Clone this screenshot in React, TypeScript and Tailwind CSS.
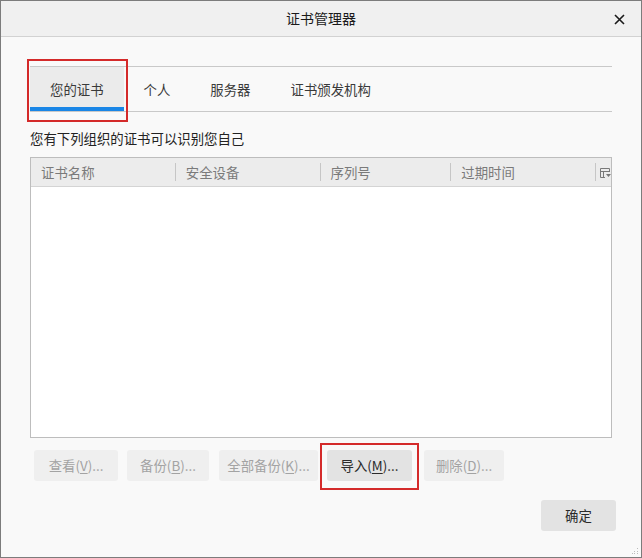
import React from "react";

const font = { fontFamily: '"Noto Sans CJK SC", "Noto Sans", sans-serif' };

function Tab({ label, active }: { label: string; active?: boolean }) {
  return (
    <div
      className={
        "relative flex h-full items-center px-5 text-[13.4px] text-[#3a3a3a] " +
        (active ? "bg-[#ebebeb]" : "")
      }
    >
      {label}
      {active && <div className="absolute bottom-0 left-0 right-0 h-[4px] bg-[#1a86e6]" />}
    </div>
  );
}

function Btn({
  label,
  k,
  rest,
  w,
  disabled,
}: {
  label: string;
  k: string;
  rest: string;
  w: string;
  disabled?: boolean;
}) {
  return (
    <div
      className={
        "flex h-[31px] items-center justify-center rounded-[3px] text-[13.4px] " +
        w +
        (disabled ? " bg-[#efefef] text-[#a3a3a3]" : " bg-[#e3e3e3] text-[#2a2a2a]")
      }
    >
      {label}(<span className="underline underline-offset-2">{k}</span>){rest}
    </div>
  );
}

const cols = [
  { name: "证书名称", w: "w-[145px]" },
  { name: "安全设备", w: "w-[145px]" },
  { name: "序列号", w: "w-[131px]" },
  { name: "过期时间", w: "w-[145px]" },
];

export default function App() {
  return (
    <div
      className="flex h-[558px] w-[642px] flex-col border border-[#7c7c7c] bg-[#f9f9f9]"
      style={font}
    >
      <div className="relative flex h-[36px] shrink-0 items-center justify-center border-b border-[#d2d2d2] bg-[#f0f0f0] text-[14px] text-[#1a1a1a]">
        证书管理器
        <svg className="absolute right-[16px] top-[13px]" width="11" height="11" viewBox="0 0 11 11">
          <path d="M1 1L10 10M10 1L1 10" stroke="#1a1a1a" strokeWidth="1.6" />
        </svg>
      </div>

      <div className="flex flex-1 flex-col px-[29px]">
        <div className="relative mt-[29px] flex h-[46px] border-y border-[#c9c9c9]">
          <Tab label="您的证书" active />
          <Tab label="个人" />
          <Tab label="服务器" />
          <Tab label="证书颁发机构" />
          <div className="pointer-events-none absolute left-[-3px] top-[-8px] h-[63px] w-[101px] border-2 border-[#d42a2a]" />
        </div>

        <div className="mt-[17px] text-[13.4px] leading-[18px] text-[#222]">您有下列组织的证书可以识别您自己</div>

        <div className="mt-[10px] flex h-[281px] w-[582px] flex-col border border-[#bdbdbd] bg-white">
          <div className="flex h-[29px] shrink-0 items-center border-b border-[#d4d4d4] bg-[#ececec] text-[13.4px] text-[#7a7a7a]">
            {cols.map((c) => (
              <div key={c.name} className={"flex h-full items-center " + c.w}>
                <span className="pl-[10px]">{c.name}</span>
                <div className="ml-auto h-[18px] w-px bg-[#c6c6c6]" />
              </div>
            ))}
            <svg className="ml-[4px]" width="11" height="11" viewBox="0 0 11 11">
              <path d="M0.5 1.5H9.5V5M0.5 1.5V10.5H5M0.5 4.5H9.5M3.5 4.5V10.5" stroke="#777" fill="none" />
              <path d="M6 7H11L8.5 10Z" fill="#777" />
            </svg>
          </div>
          <div className="flex-1" />
        </div>

        <div className="mt-[12px] flex pl-[4px]">
          <Btn label="查看" k="V" rest="..." w="w-[84px]" disabled />
          <div className="ml-[9px]">
            <Btn label="备份" k="B" rest="..." w="w-[82px]" disabled />
          </div>
          <div className="ml-[10px]">
            <Btn label="全部备份" k="K" rest="..." w="w-[99px]" disabled />
          </div>
          <div className="relative ml-[9px]">
            <Btn label="导入" k="M" rest="..." w="w-[85px]" />
            <div className="pointer-events-none absolute left-[-7px] top-[-7px] h-[47px] w-[99px] border-2 border-[#d42a2a]" />
          </div>
          <div className="ml-[12px]">
            <Btn label="删除" k="D" rest="..." w="w-[80px]" disabled />
          </div>
        </div>

        <div className="mt-[19px] flex justify-end">
          <div className="mr-[-4px] flex h-[31px] w-[75px] items-center justify-center rounded-[3px] bg-[#e3e3e3] text-[13.4px] text-[#2a2a2a]">
            确定
          </div>
        </div>
      </div>
      <div className="flex h-0 justify-end">
        <svg className="mr-[2px] mt-[-9px]" width="7" height="7" viewBox="0 0 7 7">
          <rect x="5" y="0" width="1" height="1" fill="#bbb" />
          <rect x="2" y="3" width="1" height="1" fill="#bbb" />
          <rect x="5" y="3" width="1" height="1" fill="#bbb" />
          <rect x="0" y="5" width="1" height="1" fill="#bbb" />
          <rect x="2" y="5" width="1" height="1" fill="#bbb" />
          <rect x="5" y="5" width="1" height="1" fill="#bbb" />
        </svg>
      </div>
    </div>
  );
}
